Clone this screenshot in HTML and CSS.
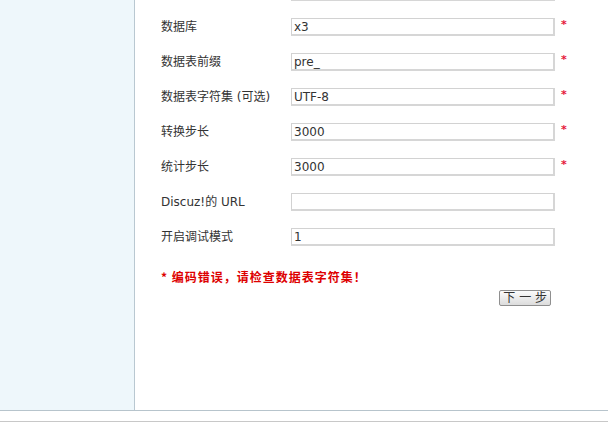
FILE: index.html
```html
<!DOCTYPE html>
<html lang="zh-CN">
<head>
<meta charset="utf-8">
<title>安装 - 数据库设置</title>
<link rel="stylesheet" href="styles.css">
</head>
<body>
<div class="wrap">
  <div class="side"></div>
  <div class="main">
    <form class="form">
      <div class="row"><label class="lbl"></label><input class="txt" type="text" value=""><span class="req"></span></div>
      <div class="row"><label class="lbl">数据库</label><input class="txt" type="text" value="x3"><span class="req">*</span></div>
      <div class="row"><label class="lbl">数据表前缀</label><input class="txt" type="text" value="pre_"><span class="req">*</span></div>
      <div class="row"><label class="lbl">数据表字符集 (可选)</label><input class="txt" type="text" value="UTF-8"><span class="req">*</span></div>
      <div class="row"><label class="lbl">转换步长</label><input class="txt" type="text" value="3000"><span class="req">*</span></div>
      <div class="row"><label class="lbl">统计步长</label><input class="txt" type="text" value="3000"><span class="req">*</span></div>
      <div class="row"><label class="lbl">Discuz!的 URL</label><input class="txt" type="text" value=""><span class="req"></span></div>
      <div class="row"><label class="lbl">开启调试模式</label><input class="txt" type="text" value="1"><span class="req"></span></div>
      <p class="error">* 编码错误，请检查数据表字符集！</p>
      <div class="actions"><button type="button" class="btn">下 一 步</button></div>
    </form>
  </div>
</div>
<div class="footer"></div>
</body>
</html>
```
FILE: styles.css
```css
html, body {
  margin: 0;
  padding: 0;
  background: #fff;
}
body {
  font-family: "DejaVu Sans", "Noto Sans CJK SC", sans-serif;
  font-size: 12px;
  color: #333;
  overflow: hidden;
}
.wrap {
  display: flex;
  height: 411px;
  border-bottom: 1px solid #b7c4cc;
  box-sizing: border-box;
}
.side {
  width: 134px;
  flex: none;
  background: #eef7fb;
  border-right: 1px solid #b9c8d1;
}
.main {
  flex: 1;
  overflow: hidden;
  padding-left: 26px;
}
.form {
  margin: -25px 0 0 0;
}
.row {
  display: flex;
  align-items: flex-start;
  height: 35px;
  padding-top: 8px;
  box-sizing: border-box;
}
.lbl {
  width: 130px;
  flex: none;
  line-height: 18px;
  font-size: 12px;
  color: #333;
}
.txt {
  width: 264px;
  height: 18px;
  box-sizing: border-box;
  margin: 0;
  padding: 0 2px;
  border-style: solid;
  border-width: 1px 2px 2px 1px;
  border-color: #d2d2d2 #d6d6d6 #d6d6d6 #d2d2d2;
  font-family: "DejaVu Sans", "Noto Sans CJK SC", sans-serif;
  font-size: 12px;
  color: #333;
  background: #fff;
  outline: none;
}
.req {
  margin-left: 6px;
  color: #e5163a;
  font-size: 11px;
  line-height: 14px;
  font-weight: bold;
}
.error {
  margin: 12px 0 0 0;
  line-height: 20px;
  font-size: 12px;
  font-weight: bold;
  letter-spacing: 1px;
  color: #dd0000;
  font-family: "Noto Sans CJK SC", sans-serif;
}
.actions {
  width: 394px;
  text-align: right;
  padding-right: 4px;
  box-sizing: border-box;
  margin-top: 3px;
}
.btn {
  height: 16px;
  padding: 0 3px;
  margin: 0;
  border: 1px solid #8f8f8f;
  border-radius: 2px;
  background: linear-gradient(#fbfbfb, #dcdcdc);
  font-family: "DejaVu Sans", "Noto Sans CJK SC", sans-serif;
  font-size: 12px;
  line-height: 14px;
  color: #333;
}
.footer {
  margin-top: 10px;
  border-top: 1px solid #c8c8c8;
  height: 3px;
}
```
